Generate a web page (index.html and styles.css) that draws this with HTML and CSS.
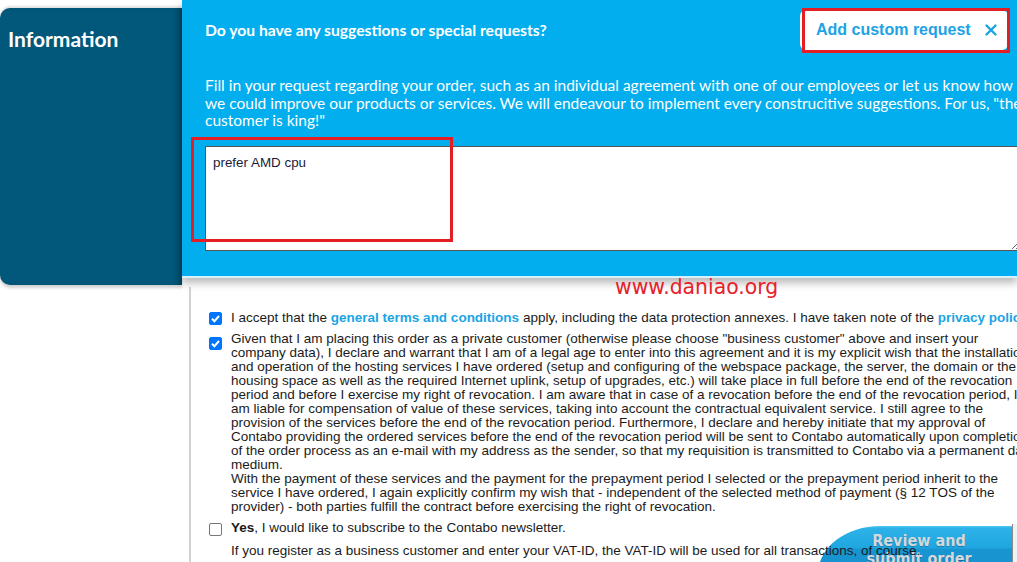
FILE: index.html
```html
<!DOCTYPE html>
<html>
<head>
<meta charset="utf-8">
<link rel="stylesheet" href="styles.css">
</head>
<body>
<div class="page">
  <div class="top">
    <aside class="info">
      <h2 class="info-title">Information</h2>
    </aside>
    <section class="request">
      <div class="request-head">
        <h3 class="request-title">Do you have any suggestions or special requests?</h3>
        <button class="custom-btn">Add custom request <svg class="close" viewBox="0 0 12 12" width="12" height="12"><path d="M1.5 1.5 L10.5 10.5 M10.5 1.5 L1.5 10.5" stroke="#1ba3e4" stroke-width="2.4" stroke-linecap="round"/></svg></button>
      </div>
      <p class="request-text">Fill in your request regarding your order, such as an individual agreement with one of our employees or let us know how<br>we could improve our products or services. We will endeavour to implement every construcitive suggestions. For us, "the<br>customer is king!"</p>
      <textarea class="request-input">prefer AMD cpu</textarea>
    </section>
  </div>

  <section class="terms">
    <div class="row">
      <span class="cb checked"><svg viewBox="0 0 13 13" width="13" height="13"><path d="M3 6.8 L5.4 9.2 L10 4" fill="none" stroke="#fff" stroke-width="2"/></svg></span>
      <p class="row-text">I accept that the <a class="link">general terms and conditions</a> apply, including the data protection annexes. I have taken note of the <a class="link">privacy policy</a>.</p>
    </div>
    <div class="row">
      <span class="cb checked"><svg viewBox="0 0 13 13" width="13" height="13"><path d="M3 6.8 L5.4 9.2 L10 4" fill="none" stroke="#fff" stroke-width="2"/></svg></span>
      <p class="row-text">Given that I am placing this order as a private customer (otherwise please choose "business customer" above and insert your<br>company data), I declare and warrant that I am of a legal age to enter into this agreement and it is my explicit wish that the installation<br>and operation of the hosting services I have ordered (setup and configuring of the webspace package, the server, the domain or the<br>housing space as well as the required Internet uplink, setup of upgrades, etc.) will take place in full before the end of the revocation<br>period and before I exercise my right of revocation. I am aware that in case of a revocation before the end of the revocation period, I<br>am liable for compensation of value of these services, taking into account the contractual equivalent service. I still agree to the<br>provision of the services before the end of the revocation period. Furthermore, I declare and hereby initiate that my approval of<br>Contabo providing the ordered services before the end of the revocation period will be sent to Contabo automatically upon completion<br>of the order process as an e-mail with my address as the sender, so that my requisition is transmitted to Contabo via a permanent data<br>medium.<br>With the payment of these services and the payment for the prepayment period I selected or the prepayment period inherit to the<br>service I have ordered, I again explicitly confirm my wish that - independent of the selected method of payment (§ 12 TOS of the<br>provider) - both parties fulfill the contract before exercising the right of revocation.</p>
    </div>
    <div class="row">
      <span class="cb"></span>
      <p class="row-text"><b>Yes</b>, I would like to subscribe to the Contabo newsletter.</p>
    </div>
    <p class="note">If you register as a business customer and enter your VAT-ID, the VAT-ID will be used for all transactions, of course.</p>
  </section>

  <div class="submit-btn"><span>Review and</span><span>submit order</span></div>
  <div class="edge"></div>
  <div class="mark-ta"></div>
  <div class="mark-btn"></div>
  <div class="watermark">www.daniao.org</div>
</div>
</body>
</html>
```

FILE: styles.css
```css
html, body {
  margin: 0;
  padding: 0;
  background: #fff;
  overflow: hidden;
}
.page {
  position: relative;
  width: 1017px;
  height: 562px;
  overflow: hidden;
}
.top {
  display: flex;
  align-items: flex-start;
  height: 287px;
}
.info {
  width: 182px;
  height: 277px;
  margin-top: 8px;
  flex: none;
  background: #02587b;
  border-radius: 10px 0 0 10px;
  box-shadow: 0 -2px 2px rgba(0,0,0,0.12), 0 3px 3px rgba(0,0,0,0.18), inset -6px 0 6px -3px rgba(0,0,0,0.25);
  box-sizing: border-box;
  padding: 18px 8px;
}
.info-title {
  margin: 0;
  color: #fff;
  font-family: "Lato", "Open Sans", sans-serif;
  font-weight: 700;
  font-size: 21px;
  line-height: 26px;
}
.request {
  position: relative;
  z-index: 2;
  flex: none;
  width: 835px;
  height: 278px;
  box-sizing: border-box;
  background: #02aeed;
  border-bottom: 2px solid #d9f0fb;
  padding: 10px 9px 0 23px;
  box-shadow: 0 5px 8px rgba(0,0,0,0.28);
  overflow: hidden;
  font-family: "Lato", "Open Sans", sans-serif;
  color: #fff;
}
.request-head {
  display: flex;
  align-items: center;
  justify-content: space-between;
  height: 40px;
}
.request-title {
  margin: 0;
  font-size: 15.7px;
  font-weight: 700;
}
.custom-btn {
  height: 40px;
  width: 208px;
  border: none;
  border-radius: 6px;
  background: #fff;
  color: #1ba3e4;
  font-family: "Liberation Sans", Arial, sans-serif;
  font-weight: 700;
  font-size: 16px;
  padding: 0 0 0 16px;
  text-align: left;
  display: flex;
  align-items: center;
}
.close {
  margin-left: 14px;
}
.request-text {
  margin: 27px 0 0;
  font-size: 15.5px;
  line-height: 17.5px;
  white-space: nowrap;
}
.request-input {
  display: block;
  margin-top: 16px;
  width: 816px;
  height: 105px;
  box-sizing: border-box;
  border: 1px solid #555;
  padding: 8px 7px;
  font-family: "Liberation Sans", Arial, sans-serif;
  font-size: 13.4px;
  color: #1c1c3a;
  resize: both;
  outline: none;
}
.terms {
  margin-left: 189px;
  border-left: 2px solid #d2d2d2;
  padding: 24px 0 0 18px;
  font-family: "Liberation Sans", Arial, sans-serif;
  font-size: 13.5px;
  line-height: 14px;
  color: #1b1b1b;
  white-space: nowrap;
  position: relative;
  z-index: 1;
  height: 300px;
}
.row {
  display: flex;
  align-items: flex-start;
  gap: 9px;
  margin-bottom: 7px;
}
.row:nth-child(3) {
  margin-bottom: 6px;
}
.cb {
  flex: none;
  width: 13px;
  height: 13px;
  margin-top: 1px;
  box-sizing: border-box;
  border: 1px solid #767676;
  border-radius: 2px;
  background: #fff;
  display: flex;
}
.cb.checked {
  background: #0075ff;
  border-color: #0075ff;
}
.cb svg {
  margin: -1px;
}
.row:nth-child(2) .cb {
  margin-top: 5px;
}
.row:nth-child(3) .cb {
  margin-top: 2px;
}
.row-text {
  margin: 0;
}
.link {
  color: #1aa5e6;
  font-weight: 700;
}
.note {
  margin: 8px 0 0 22px;
}
.submit-btn {
  position: absolute;
  left: 818px;
  top: 526px;
  width: 194px;
  height: 50px;
  border-top-left-radius: 62px 48px;
  background: linear-gradient(#56c8f2 0, #2db2e8 2px, #1fa6e0 22px, #1896d2 23px, #1790cc 50px);
  display: flex;
  flex-direction: column;
  align-items: center;
  padding-left: 8px;
  box-sizing: border-box;
  font-family: "DejaVu Sans Condensed", "DejaVu Sans", sans-serif;
  font-weight: 700;
  font-size: 16px;
  line-height: 18px;
  color: #d3d8dc;
  text-shadow: 0 1px 1px rgba(0,0,0,0.25);
  padding-top: 6px;
  z-index: 0;
}
.edge {
  position: absolute;
  left: 1012px;
  top: 524px;
  width: 5px;
  height: 40px;
  border-left: 1px solid #8a8a8a;
  background: #eef3f6;
}
.mark-ta {
  position: absolute;
  left: 191px;
  top: 137px;
  width: 262px;
  height: 105px;
  box-sizing: border-box;
  border: 3px solid #e31e24;
  z-index: 5;
}
.mark-btn {
  position: absolute;
  left: 802px;
  top: 8px;
  width: 208px;
  height: 45px;
  box-sizing: border-box;
  border: 3px solid #e31e24;
  z-index: 5;
}
.watermark {
  position: absolute;
  left: 615px;
  top: 275px;
  font-family: "DejaVu Sans", sans-serif;
  font-size: 20.4px;
  color: #e8202a;
  z-index: 6;
}
```
